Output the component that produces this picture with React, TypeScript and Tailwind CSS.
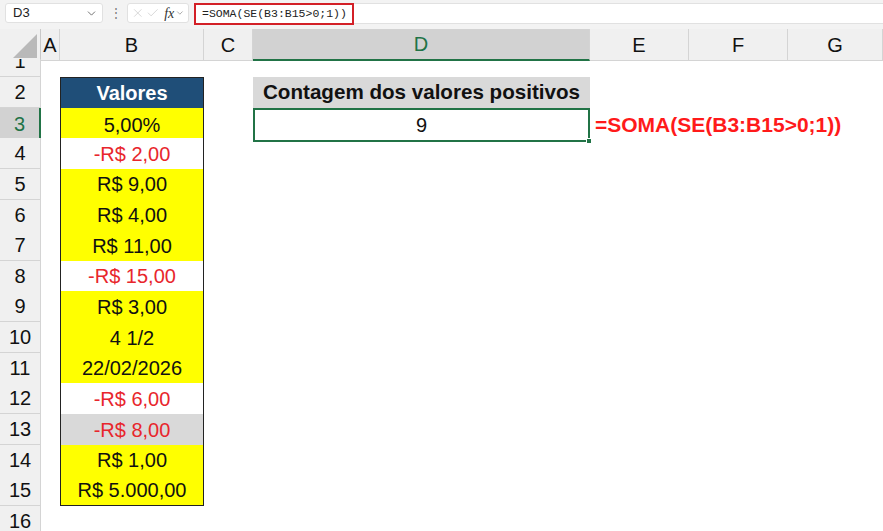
import React from "react";
import { X, Check, ChevronDown } from "lucide-react";

type Cell = { text: string; bg: string; color: string; bold?: boolean };

const cols = "grid grid-cols-[41px_19px_144px_49px_337px_99px_99px_1fr]";

const values: Cell[] = [
  { text: "Valores", bg: "bg-[#1f4e78]", color: "text-white", bold: true },
  { text: "5,00%", bg: "bg-[#ffff00]", color: "text-[#111]" },
  { text: "-R$ 2,00", bg: "bg-white", color: "text-[#e8262c]" },
  { text: "R$ 9,00", bg: "bg-[#ffff00]", color: "text-[#111]" },
  { text: "R$ 4,00", bg: "bg-[#ffff00]", color: "text-[#111]" },
  { text: "R$ 11,00", bg: "bg-[#ffff00]", color: "text-[#111]" },
  { text: "-R$ 15,00", bg: "bg-white", color: "text-[#e8262c]" },
  { text: "R$ 3,00", bg: "bg-[#ffff00]", color: "text-[#111]" },
  { text: "4 1/2", bg: "bg-[#ffff00]", color: "text-[#111]" },
  { text: "22/02/2026", bg: "bg-[#ffff00]", color: "text-[#111]" },
  { text: "-R$ 6,00", bg: "bg-white", color: "text-[#e8262c]" },
  { text: "-R$ 8,00", bg: "bg-[#d9d9d9]", color: "text-[#e8262c]" },
  { text: "R$ 1,00", bg: "bg-[#ffff00]", color: "text-[#111]" },
  { text: "R$ 5.000,00", bg: "bg-[#ffff00]", color: "text-[#111]" },
];

function RowHeader({ n, selected }: { n: number; selected?: boolean }) {
  return (
    <div
      className={`flex items-center justify-center border-b border-r text-[20px] ${
        selected
          ? "bg-[#d2d2d2] text-[#217346] border-r-2 border-r-[#217346] border-b-[#c8c8c8]"
          : "bg-[#f0f0f0] text-[#111] border-[#d4d4d4]"
      }`}
    >
      {n}
    </div>
  );
}

export default function App() {
  const rows = Array.from({ length: 15 }, (_, i) => i + 2);

  return (
    <div
      className="w-[883px] h-[531px] overflow-hidden bg-white flex flex-col"
      style={{ fontFamily: '"Liberation Sans", Arial, sans-serif' }}
    >
      {/* Formula bar */}
      <div className="h-[29px] shrink-0 bg-[#f3f3f3] flex items-start pt-[3px] pl-[5px]">
        <div className="w-[98px] h-[20px] bg-white border border-[#e1e1e1] rounded-[3px] flex items-center justify-between pl-[7px] pr-[4px] text-[13px] text-[#222]">
          <span>D3</span>
          <ChevronDown size={13} strokeWidth={1.5} className="text-[#555]" />
        </div>
        <div className="h-[20px] ml-[7px] flex items-center text-[#777] text-[12px]">⋮</div>
        <div className="ml-[5px] w-[62px] h-[20px] bg-white border border-[#e1e1e1] rounded-[3px] flex items-center gap-[1px] px-[3px]">
          <X size={14} strokeWidth={1.1} className="text-[#c2c2c2]" />
          <Check size={14} strokeWidth={1.1} className="text-[#c2c2c2]" />
          <span className="ml-[4px] text-[14px] italic text-[#333]" style={{ fontFamily: '"Liberation Serif", serif' }}>
            fx
          </span>
          <ChevronDown size={10} strokeWidth={1.5} className="text-[#777]" />
        </div>
        <div className="ml-[5px] flex-1 h-[21px] bg-white border-y border-[#e1e1e1] flex items-center">
          <div
            className="h-[22px] w-[160px] border-2 border-[#d32027] flex items-center pl-[6px] text-[11.5px] text-[#222]"
            style={{ fontFamily: '"Liberation Mono", monospace' }}
          >
            =SOMA(SE(B3:B15&gt;0;1))
          </div>
        </div>
      </div>

      {/* Column headers */}
      <div className={`${cols} h-[30px] shrink-0 text-[20px] text-[#111]`}>
        <div className="bg-[#f0f0f0] border-r border-b border-[#c8c8c8] flex items-end justify-end pr-[3px] pb-[2px]">
          <svg width="24" height="24" viewBox="0 0 24 24">
            <polygon points="24,0 24,24 0,24" fill="#b9b9b9" />
          </svg>
        </div>
        {["A", "B", "C"].map((c) => (
          <div key={c} className="bg-[#f0f0f0] border-r border-b border-[#d4d4d4] flex items-center justify-center">
            {c}
          </div>
        ))}
        <div className="bg-[#d2d2d2] border-r border-[#d4d4d4] border-b-2 border-b-[#217346] flex items-center justify-center text-[#217346]">
          D
        </div>
        {["E", "F", "G"].map((c) => (
          <div key={c} className="bg-[#f0f0f0] border-r border-b border-[#d4d4d4] flex items-center justify-center">
            {c}
          </div>
        ))}
      </div>

      {/* Row 1 (partly scrolled) */}
      <div className={`${cols} h-[18px] shrink-0 overflow-hidden`}>
        <div className="bg-[#f0f0f0] border-r border-b border-[#d4d4d4] overflow-hidden">
          <div className="h-[30px] -mt-[13px] flex items-center justify-center text-[20px] text-[#111]">1</div>
        </div>
        <div className="col-span-7" />
      </div>

      {/* Rows 2..16 */}
      {rows.map((r) => {
        const v = values[r - 2];
        return (
          <div key={r} className={`${cols} h-[30.65px] shrink-0`}>
            <RowHeader n={r} selected={r === 3} />
            <div />
            {v ? (
              <div
                className={`flex items-center justify-center text-[20px] border-x border-[#222] ${v.bg} ${v.color} ${
                  v.bold ? "font-bold" : ""
                } ${r === 2 ? "border-t" : ""} ${r === 15 ? "border-b" : ""}`}
              >
                {v.text}
              </div>
            ) : (
              <div />
            )}
            <div />
            {r === 2 ? (
              <div className="bg-[#d9d9d9] flex items-center justify-center font-bold text-[20.6px] text-[#111]">
                Contagem dos valores positivos
              </div>
            ) : r === 3 ? (
              <div className="relative border-2 border-[#217346] flex items-center justify-center text-[20px] text-[#111]">
                9
                <div className="absolute -right-[4px] -bottom-[4px] w-[6px] h-[6px] bg-[#217346] border border-white" />
              </div>
            ) : (
              <div />
            )}
            {r === 3 ? (
              <div className="relative flex items-center pl-[5px] overflow-visible">
                <span className="whitespace-nowrap font-bold text-[21px] text-[#ff1a1a]">=SOMA(SE(B3:B15&gt;0;1))</span>
              </div>
            ) : (
              <div />
            )}
            <div />
            <div />
          </div>
        );
      })}
    </div>
  );
}
